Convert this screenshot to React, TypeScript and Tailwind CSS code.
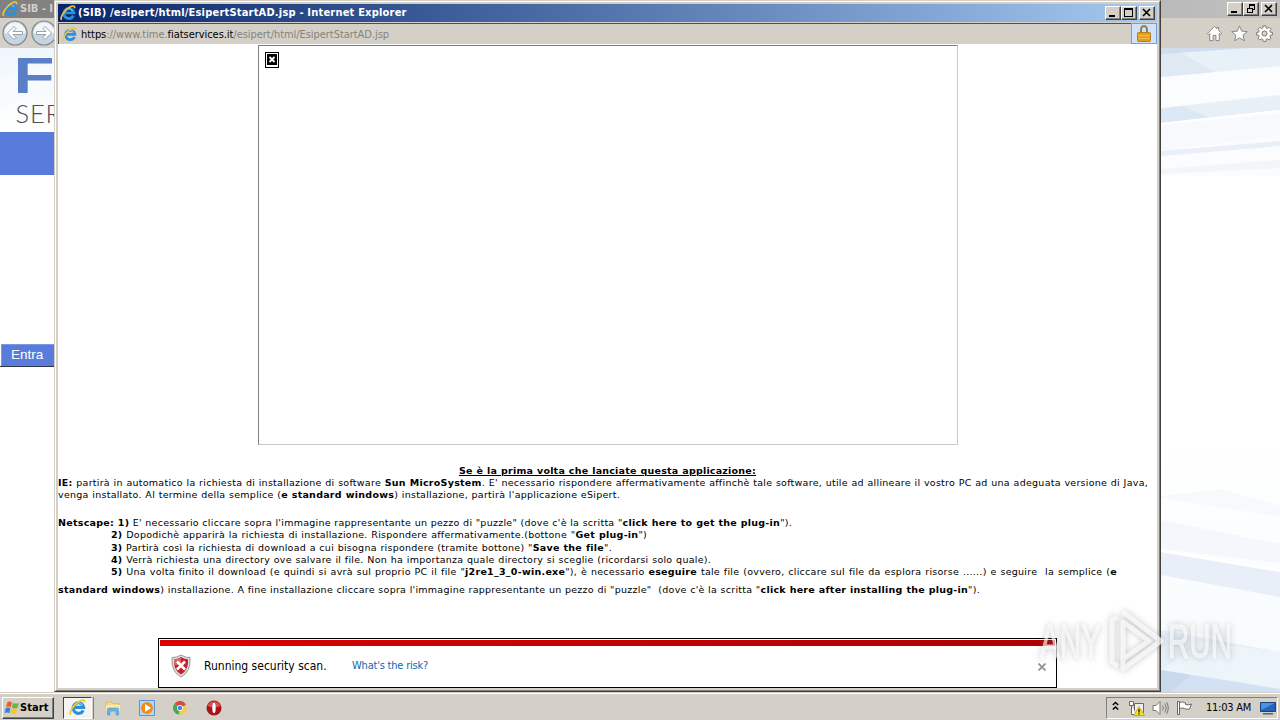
import clsx from "clsx";
import type { ReactNode } from "react";

interface LineProps {
  children: ReactNode;
  className?: string;
}

const IeIcon = ({ className }: { className?: string }) => (
  <svg viewBox="0 0 16 16" className={clsx("shrink-0", className)} fill="none">
    <path
      d="M13.4 10.6a5 5 0 1 1 .4-2.700H5"
      stroke="#2b8fdc"
      strokeWidth="2.9"
    />
    <path
      d="M4.600 6.600a4.200 4.200 0 0 1 7.900-.4"
      stroke="#7fd0f8"
      strokeWidth="1"
    />
    <path
      d="M1.700 14.800C-.4 12.500 4.200 5.500 9.500 2.300c3.300-2 5.600-1.700 5 1"
      stroke="#f3c62d"
      strokeWidth="1.7"
    />
  </svg>
);

const CaptionButton = ({ children }: { children: ReactNode }) => (
  <div className="flex h-[14px] w-4 items-center justify-center border border-t-white border-l-white border-r-[#404040] border-b-[#404040] bg-[#d4d0c8] shadow-[inset_-1px_-1px_0_#808080]">
    <svg viewBox="0 0 12 10" className="h-[10px] w-3" fill="none" stroke="#000" shapeRendering="crispEdges">
      {children}
    </svg>
  </div>
);

const CaptionButtons = ({ restore }: { restore?: boolean }) => (
  <div className="flex shrink-0">
    <CaptionButton>
      <path d="M2 8h6" strokeWidth="2" />
    </CaptionButton>
    <CaptionButton>
      {restore ? (
        <>
          <path d="M4 1h6M4.500 2v2M9.500 2v4M8 5.500h2" strokeWidth="1.500" />
          <path d="M2 4.500h6M2.500 5v4M7.500 5v4M2 8.500h6" />
        </>
      ) : (
        <>
          <path d="M1 1h9" strokeWidth="2" />
          <path d="M1.500 1v8M9.500 1v8M1 8.500h9" />
        </>
      )}
    </CaptionButton>
    <div className="w-[2px]" />
    <CaptionButton>
      <path d="M2 1l7 7M9 1L2 8" strokeWidth="1.600" shapeRendering="auto" />
    </CaptionButton>
  </div>
);

const NavArrow = ({ flip }: { flip?: boolean }) => (
  <svg viewBox="0 0 26 26" className={clsx("h-[26px] w-[26px] shrink-0", flip && "-scale-x-100")}>
    <circle cx="13" cy="13" r="12" fill="#c6d5de" stroke="#7c8790" strokeWidth="1.200" />
    <path d="M2.500 13a10.500 10.500 0 0 1 21 0q-10 4-21 0z" fill="#f2f6f8" />
    <path
      d="M5.500 13l6.500-6.500 2 2-3 3h9.500v3H11l3 3-2 2z"
      fill="#fff"
      stroke="#8c9aa5"
      strokeWidth=".9"
    />
  </svg>
);

const ToolIcons = () => (
  <div className="flex gap-2 pr-[7px]">
    <svg viewBox="0 0 18 18" className="h-[17px] w-[17px]" fill="#fff" stroke="#85827d">
      <path d="M1.500 9L9 1.500l2.500 2.500V2.500h2V6l3 3-1 1.200-1.500-1.200v7.500h-3.500V11h-3v5.500H4V9l-1.500 1.200z" />
    </svg>
    <svg viewBox="0 0 18 18" className="h-[17px] w-[17px]" fill="#fff" stroke="#85827d">
      <path d="M9 1l2.300 5.500 5.900.5-4.500 3.900 1.400 5.800L9 13.600l-5.100 3.100 1.400-5.800L.8 7l5.900-.5z" />
    </svg>
    <svg viewBox="0 0 18 18" className="h-[17px] w-[17px]" fill="#fff" stroke="#77746f">
      <path d="M7.500 1h3l.3 2.200 1.300.6 1.800-1.300 2 2-1.300 1.800.6 1.300 2.200.3v2.600l-2.200.3-.6 1.300 1.300 1.800-2 2-1.800-1.300-1.300.6-.3 2.200h-3l-.3-2.200-1.300-.6-1.800 1.300-2-2 1.300-1.800-.6-1.300-2.200-.3V7.900l2.200-.3.6-1.300-1.300-1.800 2-2 1.800 1.300 1.300-.6z" />
      <circle cx="9" cy="9" r="2.700" fill="#d4d0c8" />
    </svg>
  </div>
);

const TopArt = () => (
  <svg viewBox="0 0 119 128" className="h-32 w-[119px]" preserveAspectRatio="none">
    <rect width="119" height="128" fill="#fafcfe" />
    <path d="M0 0h119v18L0 29z" fill="#e9f1f8" />
    <path d="M0 0h12l42 24L0 29z" fill="#dfe9f4" />
    <path d="M0 6L119-2v-1H0z" fill="#cfdded" />
    <path d="M0 60l119-13v15L0 75z" fill="#e7f0f7" />
    <path d="M0 61l22-3 26 11-48 6z" fill="#dce8f3" />
    <path d="M0 75l119-13v2L0 77z" fill="#fff" />
    <path d="M0 77l119-11v22L0 102z" fill="#f7f9fd" />
    <path d="M0 103l119-10v5L0 108z" fill="#e9eff6" />
    <path d="M0 121l119-9v8L0 126z" fill="#f1f7f9" />
  </svg>
);

const BottomArt = () => (
  <svg viewBox="0 0 119 252" className="h-[252px] w-[119px]" preserveAspectRatio="none">
    <defs>
      <linearGradient id="haze" x2="0" y2="1">
        <stop stopColor="#fff" />
        <stop offset="1" stopColor="#f6fbfd" />
      </linearGradient>
    </defs>
    <rect width="119" height="252" fill="url(#haze)" />
    <path d="M0 56l60-7 59 17v11L0 58z" fill="#f7fafd" />
    <path d="M0 80l119 24v19L0 109z" fill="#f4f8fc" />
    <path d="M0 112l119 20v25L0 135z" fill="#e9eff9" />
    <path d="M0 109l119 20v3L0 112z" fill="#fff" />
    <path d="M0 190l119 22v40H0z" fill="#e6f0f8" />
    <path d="M0 230l40-28 79 10v36z" fill="#edf5fb" />
    <path d="M0 230l119 19v3H0z" fill="#d3e2f2" />
    <path d="M0 230l30 5-20 17H0z" fill="#c9daee" />
  </svg>
);

const BackWindow = () => (
  <div className="absolute inset-0 flex flex-col bg-white">
    <div className="flex h-[18px] shrink-0 items-center justify-between bg-linear-to-r from-[#808080] to-[#c0c0c0] pr-[3px] pl-[2px]">
      <div className="flex items-center gap-[2px]">
        <IeIcon className="h-4 w-4" />
        <span className="pt-px font-['DejaVu_Sans_Condensed','DejaVu_Sans',sans-serif] text-[11px] font-bold text-[#d4d0c8]">SIB - I</span>
      </div>
      <CaptionButtons restore />
    </div>
    <div className="flex h-[30px] shrink-0 items-center justify-between bg-[#d4d0c8] pl-[2px]">
      <div className="flex gap-[3px]">
        <NavArrow />
        <NavArrow flip />
      </div>
      <ToolIcons />
    </div>
    <div className="flex flex-1 justify-between">
      <div className="w-[54px] overflow-hidden">
        <div className="h-[84px] bg-linear-to-b from-[#eff6fc] to-white">
          <svg viewBox="0 0 54 84" className="h-[84px] w-[54px]">
            <path d="M0 30L54 16v20L0 60z" fill="#f8fbfe" />
            <text x="13.500" y="45" textLength="41" lengthAdjust="spacingAndGlyphs" fontSize="50" fontWeight="700" fill="#5b7fc7" fontFamily="Liberation Sans, sans-serif">F</text>
            <text x="15.500" y="75" fontSize="25.500" letterSpacing=".8" fill="#4a4d57" fontFamily="Lato, sans-serif" fontWeight="300">SER</text>
          </svg>
        </div>
        <div className="h-[43px] bg-[#597bdb]" />
        <div className="mt-[169px] h-[23px] border-b border-b-[#303848] pl-px">
          <div className="h-[22px] border-t border-l border-[#7c98e6] bg-[#597bdb] pl-[9px] font-['Liberation_Sans',sans-serif] text-[13.500px] leading-[19px] text-white">
            Entra
          </div>
        </div>
      </div>
      <div className="flex flex-col justify-between pb-7">
        <TopArt />
        <BottomArt />
      </div>
    </div>
  </div>
);

const Line = ({ children, className }: LineProps) => (
  <p className={clsx("h-3 whitespace-nowrap [text-align-last:justify]", className)}>{children}</p>
);

const Instructions = () => (
  <div className="pt-5 font-['DejaVu_Sans',sans-serif] text-[9.5px] leading-3 tracking-[0.26px] text-black">
    <Line className="ml-[401px] w-[297px] font-bold tracking-[0.22px] underline">Se è la prima volta che lanciate questa applicazione:</Line>
    <Line className="w-[1090px]">
      <b>IE:</b> partirà in automatico la richiesta di installazione di software <b>Sun MicroSystem</b>. E' necessario rispondere affermativamente affinchè tale software, utile ad allineare il vostro PC ad una adeguata versione di Java,
    </Line>
    <Line className="w-[562px]">
      venga installato. Al termine della semplice (<b>e standard windows</b>) installazione, partirà l'applicazione eSipert.
    </Line>
    <Line className="mt-4 w-[734px]">
      <b>Netscape: 1)</b> E' necessario cliccare sopra l'immagine rappresentante un pezzo di "puzzle" (dove c'è la scritta "<b>click here to get the plug-in</b>").
    </Line>
    <Line className="ml-[53px] w-[536px]">
      <b>2)</b> Dopodichè apparirà la richiesta di installazione. Rispondere affermativamente.(bottone "<b>Get plug-in</b>")
    </Line>
    <Line className="mt-px ml-[53px] w-[501px]">
      <b>3)</b> Partirà così la richiesta di download a cui bisogna rispondere (tramite bottone) "<b>Save the file</b>".
    </Line>
    <Line className="ml-[53px] w-[600px]">
      <b>4)</b> Verrà richiesta una directory ove salvare il file. Non ha importanza quale directory si sceglie (ricordarsi solo quale).
    </Line>
    <Line className="ml-[53px] w-[1006px]">
      <b>5)</b> Una volta finito il download (e quindi si avrà sul proprio PC il file "<b>j2re1_3_0-win.exe</b>"), è necessario <b>eseguire</b> tale file (ovvero, cliccare sul file da esplora risorse ......) e seguire&nbsp; la semplice (<b>e</b>
    </Line>
    <Line className="mt-[6px] w-[922px]">
      <b>standard windows</b>) installazione. A fine installazione cliccare sopra l'immagine rappresentante un pezzo di "puzzle"&nbsp; (dove c'è la scritta "<b>click here after installing the plug-in</b>").
    </Line>
  </div>
);

const SecurityBar = () => (
  <div className="ml-[100px] h-[50px] w-[899px] border border-black bg-white p-px font-['DejaVu_Sans_Condensed','DejaVu_Sans',sans-serif]">
    <div className="h-[6px] bg-linear-to-r from-[#dc0000] to-[#b00000]" />
    <div className="flex h-10 items-center pr-[9px] pl-[10px]">
      <svg viewBox="0 0 22 24" className="h-6 w-[22px]">
        <path d="M11 1q5 3 9 2.500Q21 18 11 23 1 18 2 3.500 6 4 11 1z" fill="#ddd" stroke="#999" />
        <path d="M11 3q4 2.500 7 2.300Q19 16 11 20.500 3 16 4 5.300 7 5.500 11 3z" fill="#c5202c" />
        <path d="M4 5.300Q7 5.500 11 3v8H4z" fill="#df6268" />
        <path d="M7 7.500l8 8M15 7.500l-8 8" stroke="#fff" strokeWidth="2.600" />
      </svg>
      <span className="ml-3 w-[123px] whitespace-nowrap text-[12px] text-black">Running security scan.</span>
      <span className="ml-[25px] whitespace-nowrap pt-px text-[11px] tracking-[-0.2px] text-[#1066b0]">What's the risk?</span>
      <svg viewBox="0 0 8 8" className="mt-[2px] ml-auto h-2 w-2" stroke="#929292" strokeWidth="1.800">
        <path d="M.5.5l7 7M7.500.5l-7 7" />
      </svg>
    </div>
  </div>
);

const FrontWindow = () => (
  <div className="absolute top-0 left-[54px] flex h-[692px] w-[1107px] flex-col border-t border-r border-b border-l border-t-[#d4d0c8] border-r-[#404040] border-b-[#404040] border-l-[#d4d0c8] bg-[#d4d0c8]">
    <div className="flex flex-1 flex-col border-t border-r border-b border-l border-t-white border-r-[#808080] border-b-[#808080] border-l-white px-[2px] pt-[2px] pb-[2px]">
      <div className="flex h-[18px] shrink-0 items-center bg-linear-to-r from-[#0a246a] to-[#a6caf0] pr-[2px] pl-[2px]">
        <IeIcon className="h-4 w-4" />
        <span className="ml-[2px] flex-1 whitespace-nowrap pt-px font-['DejaVu_Sans_Condensed','DejaVu_Sans',sans-serif] text-[11px] font-bold tracking-[0.2px] text-white">
          (SIB) /esipert/html/EsipertStartAD.jsp - Internet Explorer
        </span>
        <CaptionButtons />
      </div>
      <div className="mt-px flex h-[21px] shrink-0">
        <div className="flex flex-1 items-center border-t border-l border-[#505050] pl-[3px]">
          <IeIcon className="h-[15px] w-[15px]" />
          <span className="ml-1 whitespace-nowrap pt-[2px] font-['DejaVu_Sans_Condensed','DejaVu_Sans',sans-serif] text-[11px] tracking-[-0.05px] text-[#85827c]">
            <span className="text-black">https</span>://www.time.<span className="text-black">fiatservices.it</span>/esipert/html/EsipertStartAD.jsp
          </span>
        </div>
        <div className="flex w-[26px] items-center justify-center border border-[#6f9fdc] bg-[#cfe2fa]">
          <svg viewBox="0 0 14 17" className="h-[17px] w-[14px]">
            <path d="M4 8V4.500a3 3.500 0 0 1 6 0V8" fill="none" stroke="#8f8462" strokeWidth="2" />
            <rect x=".5" y="7.500" width="13" height="9" rx="1" fill="#e0a01c" stroke="#b77f15" />
            <path d="M1 10.500h12M1 13.500h12" stroke="#f0c04a" />
          </svg>
        </div>
      </div>
      <div className="flex flex-1 flex-col bg-white">
        <div className="mt-px ml-[200px] h-[400px] w-[700px] shrink-0 border-t border-r border-b border-l border-t-[#808080] border-r-[#c8c8c8] border-b-[#c8c8c8] border-l-[#808080] pt-[6px] pl-[6px]">
          <div className="h-4 w-[14px] border border-black p-px">
            <svg viewBox="0 0 10 12" className="h-3 w-[10px]">
              <path d="M0 0h10v11H0z" fill="#000" />
              <path d="M2.500 3l5 5M7.500 3l-5 5" stroke="#fff" strokeWidth="1.800" />
            </svg>
          </div>
        </div>
        <Instructions />
        <div className="mt-auto">
          <SecurityBar />
        </div>
      </div>
    </div>
  </div>
);

const Taskbar = () => (
  <div className="absolute inset-x-0 bottom-0 flex h-7 items-center border-t border-[#d4d0c8] bg-[#d4d0c8] pt-[2px] pr-[2px] pl-[2px] shadow-[inset_0_1px_0_#fff]">
    <div className="flex h-[22px] w-[52px] items-center border border-t-white border-l-white border-r-[#404040] border-b-[#404040] pl-[1px] shadow-[inset_-1px_-1px_0_#808080]">
      <svg viewBox="0 0 16 16" className="h-4 w-4 shrink-0">
        <path d="M3.500 2q2.500-1 4.500.5L6.800 7.300Q4.500 6 2 7z" fill="#e8622b" />
        <path d="M9 3q3 1.200 6 0l-1.500 5q-3 1-5.700-.3z" fill="#6fb43c" />
        <path d="M1.800 8Q4.500 7 6.500 8.300L5.300 13.200Q3 12 .5 13z" fill="#3b83d6" />
        <path d="M7.600 8.800q3 1.200 5.700.2L12 13.800q-3 1.200-5.700-.2z" fill="#f6c52e" />
      </svg>
      <span className="pt-px font-['DejaVu_Sans_Condensed','DejaVu_Sans',sans-serif] text-[11px] font-bold tracking-[0.1px]">Start</span>
    </div>
    <div className="ml-[9px] flex h-[22px] w-[29px] items-center justify-center border border-t-[#404040] border-l-[#404040] border-r-white border-b-white bg-[#f4f3f0]">
      <IeIcon className="h-[17px] w-[17px]" />
    </div>
    <div className="ml-[1px] h-[22px] w-px bg-[#808080]" />
    <svg viewBox="0 0 16 16" className="ml-[11px] h-4 w-4">
      <path d="M1 2h6l1 1.500h6V8H1z" fill="#f2d984" stroke="#d2ad4e" strokeWidth=".6" />
      <path d="M1 5h14v6H1z" fill="#f8e9a8" />
      <path d="M2.500 15V9q0-1 1-1h9q1 0 1 1v6h-2.500v-4H5v4z" fill="#69b3e2" stroke="#468fc5" strokeWidth=".5" />
    </svg>
    <svg viewBox="0 0 16 16" className="ml-[18px] h-4 w-4">
      <path d="M.5.5h15v15H.5z" fill="#b7d8f4" stroke="#5597d5" />
      <circle cx="8" cy="8" r="6" fill="#f08a1d" />
      <path d="M6 4l6 4-6 4z" fill="#fff" />
    </svg>
    <svg viewBox="0 0 16 16" className="ml-[18px] h-[14px] w-[14px]">
      <path d="M8 8L1.500 3.500A7.500 7.500 0 0 1 14.800 4.500z" fill="#d94b3d" />
      <path d="M8 8L7 15.500A7.500 7.500 0 0 1 1.500 3.500z" fill="#4ba655" />
      <path d="M8 8l6.800-3.500A7.500 7.500 0 0 1 7 15.500z" fill="#f5cf43" />
      <circle cx="8" cy="8" r="3.500" fill="#fff" />
      <circle cx="8" cy="8" r="2.700" fill="#4888e0" />
    </svg>
    <svg viewBox="0 0 16 16" className="ml-[19px] h-4 w-4">
      <circle cx="8" cy="8" r="7.500" fill="#a81318" />
      <path d="M1.500 6a7 7 0 0 1 13 0q-6 3-13 0z" fill="#d65453" />
      <ellipse cx="8" cy="8" rx="1.700" ry="5.200" fill="#fff" />
    </svg>
    <div className="ml-auto flex h-[22px] w-[172px] items-center border border-t-[#808080] border-l-[#808080] border-r-white border-b-white pl-[5px]">
      <svg viewBox="0 0 7 10" className="h-[10px] w-[7px] -translate-y-0.5" fill="none" stroke="#000" strokeWidth="1.500">
        <path d="M.8 4l2.700-2.500L6.200 4M.8 8.500L3.500 6l2.700 2.500" />
      </svg>
      <svg viewBox="0 0 17 16" className="ml-[9px] h-4 w-[17px]">
        <path d="M6.500 3.500h9v9h-9z" fill="#eee" stroke="#686868" />
        <path d="M1.500 1.500h4v4h-4zM3.500 5.500v9h5" fill="#fff" stroke="#686868" />
        <path d="M11 6.500l5.500 9h-11z" fill="#f7df25" stroke="#b49a14" strokeWidth=".7" />
        <path d="M11 9v3.500M11 13.300v1.200" stroke="#000" strokeWidth="1.200" />
      </svg>
      <svg viewBox="0 0 17 16" className="ml-[7px] h-4 w-[17px]" fill="none" stroke="#777">
        <path d="M1 5.500h3l4-4v13l-4-4H1z" fill="#fff" />
        <path d="M10.500 5.500q1.700 2.500 0 5M12.500 3.500q3.200 4.500 0 9M14.500 2q3.500 6 0 12" />
      </svg>
      <svg viewBox="0 0 17 16" className="ml-[7px] h-4 w-[17px]" fill="#fff" stroke="#686868">
        <path d="M1.500 1.500h2v13h-2zM3.500 2.500q3-1.500 6 .5v1.500q3 1 6-.5l-2 5q-2 1-5-.5-2-1-5 0z" />
      </svg>
      <span className="ml-[13px] w-[47px] whitespace-nowrap pt-px font-['DejaVu_Sans_Condensed','DejaVu_Sans',sans-serif] text-[11px] tracking-[-0.25px] text-black">
        11:03 AM
      </span>
      <svg viewBox="0 0 16 14" className="ml-[7px] h-[14px] w-4">
        <path d="M.5 1.500h15v9H.5z" fill="#2464bd" stroke="#17417f" />
        <path d="M1 2h14L1 9z" fill="#4c93df" />
        <path d="M3 12h10v1.500H3z" fill="#4b6587" />
      </svg>
    </div>
  </div>
);

const Watermark = () => (
  <svg
    viewBox="0 0 200 70"
    className="absolute top-[605px] left-[1036px] h-[70px] w-[200px] overflow-visible drop-shadow-[0_0_3px_rgba(90,90,90,0.5)]"
    fontFamily="Liberation Sans, sans-serif"
    fontSize="48"
    fill="#fff"
    fillOpacity=".6"
    stroke="#fff"
    strokeOpacity=".45"
    strokeWidth="1.5"
  >
    <text x="4" y="53" textLength="61" lengthAdjust="spacingAndGlyphs">ANY</text>
    <text x="132" y="53" textLength="64" lengthAdjust="spacingAndGlyphs">RUN</text>
    <g fill="none" strokeOpacity=".7" strokeWidth="5" strokeLinejoin="round">
      <path d="M87 7l38 29-38 28V17l26 19-26 18" />
      <path d="M81 12l-5 3v42l6 4" />
    </g>
  </svg>
);

export default function App() {
  return (
    <div className="relative h-[720px] w-[1280px] overflow-hidden bg-white">
      <BackWindow />
      <FrontWindow />
      <Taskbar />
      <Watermark />
    </div>
  );
}
